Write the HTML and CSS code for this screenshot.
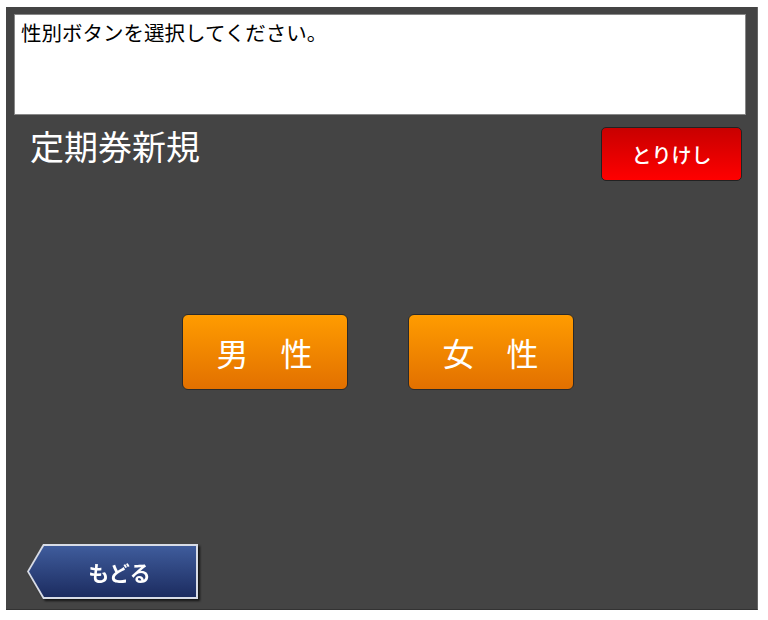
FILE: index.html
```html
<!DOCTYPE html>
<html lang="ja">
<head>
    <meta charset="UTF-8">
    <meta name="viewport" content="width=device-width, initial-scale=1.0">
    <title>定期券新規</title>
    <link rel="stylesheet" href="styles.css">
</head>
<body>
    <div class="panel">
        <div class="message">性別ボタンを選択してください。</div>

        <div class="header">
            <h1 class="title">定期券新規</h1>
            <button type="button" class="btn-cancel">とりけし</button>
        </div>

        <div class="choices">
            <button type="button" class="btn-gender">男　性</button>
            <button type="button" class="btn-gender">女　性</button>
        </div>

        <div class="footer">
            <div class="back-wrap">
                <button type="button" class="btn-back"><span class="btn-back-inner">もどる</span></button>
            </div>
        </div>
    </div>
</body>
</html>
```

FILE: styles.css
```css
body {
    margin: 0;
    padding: 0;
    background-color: #fff;
    font-family: "Noto Sans CJK JP", "Noto Sans", sans-serif;
}

.panel {
    box-sizing: border-box;
    width: 752px;
    height: 603px;
    margin: 7px 0 0 6px;
    padding: 7px 11px 10px 8px;
    background-color: #444;
    border-right: 1px solid #666;
    border-bottom: 1px solid #333;
    display: flex;
    flex-direction: column;
}

.message {
    box-sizing: border-box;
    height: 101px;
    padding: 3px 6px;
    background-color: #fff;
    border: 1px solid #888;
    color: #000;
    font-size: 20.5px;
    line-height: 28px;
}

.header {
    display: flex;
    justify-content: space-between;
    align-items: flex-start;
    margin-top: 12px;
    padding: 0 4px 0 16px;
}

.title {
    margin: 0;
    color: #fff;
    font-size: 34px;
    font-weight: normal;
    line-height: 38px;
}

.btn-cancel {
    width: 141px;
    height: 54px;
    border: 1px solid #222;
    border-radius: 5px;
    background: linear-gradient(#c80000, #ff0000);
    color: #fff;
    font-family: inherit;
    font-size: 20px;
    font-weight: 500;
    cursor: pointer;
}

.choices {
    flex: 1;
    display: flex;
    justify-content: center;
    align-items: center;
    gap: 60px;
    padding: 0 5px 22px 0;
}

.btn-gender {
    width: 166px;
    height: 76px;
    border: 1px solid #2a2a2a;
    border-radius: 6px;
    background: linear-gradient(#ff9c00, #e27000);
    color: #fff;
    font-family: inherit;
    font-size: 32px;
    cursor: pointer;
}

.footer {
    display: flex;
    padding-left: 13px;
}

.back-wrap {
    filter: drop-shadow(2px 2px 1px rgba(0, 0, 0, 0.7));
}

.btn-back {
    display: block;
    width: 171px;
    height: 55px;
    padding: 2px;
    border: none;
    background-color: #d8dce6;
    clip-path: polygon(16px 0, 100% 0, 100% 100%, 16px 100%, 0 50%);
    cursor: pointer;
}

.btn-back-inner {
    display: flex;
    justify-content: center;
    align-items: center;
    height: 100%;
    padding-left: 14px;
    box-sizing: border-box;
    background: linear-gradient(#3f5c9c, #1c2c60);
    clip-path: polygon(15px 0, 100% 0, 100% 100%, 15px 100%, 0 50%);
    color: #fff;
    font-family: "Noto Sans CJK JP", sans-serif;
    font-size: 21px;
    font-weight: bold;
}
```
